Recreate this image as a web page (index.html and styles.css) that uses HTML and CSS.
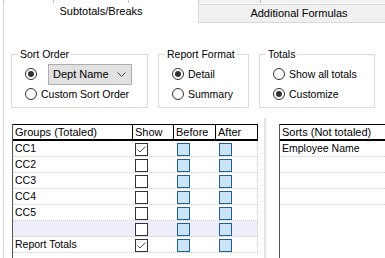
FILE: index.html
```html
<!DOCTYPE html>
<html lang="en">
<head>
    <meta charset="UTF-8">
    <title>Subtotals/Breaks</title>
    <link rel="stylesheet" href="styles.css">
</head>
<body>

<!-- back row of tabs (only the bottom edge shows) -->
<div class="tab-back">
    <span class="seg seg1"></span>
    <span class="seg seg2"></span>
    <span class="seg seg3"></span>
    <span class="seg seg4"></span>
    <span class="seg seg5 grey"></span>
    <span class="seg seg6 grey"></span>
</div>

<div class="tabs">
    <div class="tab active">Subtotals/Breaks</div>
    <div class="tab">Additional Formulas</div>
</div>

<div class="panel">
    <div class="options">
        <fieldset class="box sort-order">
            <legend>Sort Order</legend>
            <div class="opt">
                <span class="radio on"></span>
                <div class="select">
                    <span>Dept Name</span>
                    <svg width="9" height="5" viewBox="0 0 9 5"><polyline points="0.5,0.5 4.5,4.5 8.5,0.5" fill="none" stroke="#444" stroke-width="1"/></svg>
                </div>
            </div>
            <div class="opt"><span class="radio"></span>Custom Sort Order</div>
        </fieldset>

        <fieldset class="box report-format">
            <legend>Report Format</legend>
            <div class="opt"><span class="radio on"></span>Detail</div>
            <div class="opt"><span class="radio"></span>Summary</div>
        </fieldset>

        <fieldset class="box totals">
            <legend>Totals</legend>
            <div class="opt"><span class="radio"></span>Show all totals</div>
            <div class="opt"><span class="radio on"></span>Customize</div>
        </fieldset>

        <div class="extra">
            <div class="extra-label">F</div>
            <div class="extra-box"></div>
        </div>
    </div>

    <div class="lists">
        <div class="grid groups">
            <div class="cols head">
                <div class="cell">Groups (Totaled)</div>
                <div class="cell">Show</div>
                <div class="cell">Before</div>
                <div class="cell">After</div>
            </div>
            <div class="cols row">
                <div class="cell">CC1</div>
                <div class="cell chk show"><span class="check on"><svg width="11" height="11" viewBox="0 0 11 11"><polyline points="1.5,5.5 4,8 9.5,2.5" fill="none" stroke="#555" stroke-width="1"/></svg></span></div>
                <div class="cell chk"><span class="blue"></span></div>
                <div class="cell chk"><span class="blue"></span></div>
            </div>
            <div class="cols row">
                <div class="cell">CC2</div>
                <div class="cell chk show"><span class="check"></span></div>
                <div class="cell chk"><span class="blue"></span></div>
                <div class="cell chk"><span class="blue"></span></div>
            </div>
            <div class="cols row">
                <div class="cell">CC3</div>
                <div class="cell chk show"><span class="check"></span></div>
                <div class="cell chk"><span class="blue"></span></div>
                <div class="cell chk"><span class="blue"></span></div>
            </div>
            <div class="cols row">
                <div class="cell">CC4</div>
                <div class="cell chk show"><span class="check"></span></div>
                <div class="cell chk"><span class="blue"></span></div>
                <div class="cell chk"><span class="blue"></span></div>
            </div>
            <div class="cols row">
                <div class="cell">CC5</div>
                <div class="cell chk show"><span class="check"></span></div>
                <div class="cell chk"><span class="blue"></span></div>
                <div class="cell chk"><span class="blue"></span></div>
            </div>
            <div class="cols row current">
                <div class="cell"></div>
                <div class="cell chk show"><span class="check"></span></div>
                <div class="cell chk"><span class="blue"></span></div>
                <div class="cell chk"><span class="blue"></span></div>
            </div>
            <div class="cols row">
                <div class="cell">Report Totals</div>
                <div class="cell chk show"><span class="check on"><svg width="11" height="11" viewBox="0 0 11 11"><polyline points="1.5,5.5 4,8 9.5,2.5" fill="none" stroke="#555" stroke-width="1"/></svg></span></div>
                <div class="cell chk"><span class="blue"></span></div>
                <div class="cell chk"><span class="blue"></span></div>
            </div>
        </div>

        <div class="splitter"></div>

        <div class="grid sorts">
            <div class="head"><div class="cell">Sorts (Not totaled)</div></div>
            <div class="row"><div class="cell">Employee Name</div></div>
            <div class="row"></div>
            <div class="row"></div>
            <div class="row"></div>
        </div>
    </div>
</div>

</body>
</html>
```

FILE: styles.css
```css
html, body {
    margin: 0;
    padding: 0;
    overflow: hidden;
}
body {
    width: 385px;
    height: 258px;
    font-family: "Liberation Sans", Arial, sans-serif;
    font-size: 11px;
    color: #000;
    background-color: #fff;
}

/* tabs */
.tab-back {
    display: flex;
    height: 3px;
}
.seg {
    flex-shrink: 0;
    border-right: 1px solid #c4c4c4;
}
.seg1 { width: 3px; }
.seg2 { width: 49px; }
.seg3 { width: 74px; }
.seg4 { width: 69px; }
.seg5 { width: 61px; }
.seg6 { flex: 1; border-right: none; }
.grey { background-color: #f0f0f0; }

.tabs {
    display: flex;
    height: 20px;
    margin-left: 3px;
}
.tab {
    flex-shrink: 0;
    text-align: center;
}
.tab.active {
    width: 194px;
    border-left: 1px solid #d9d9d9;
    border-right: 1px solid #d9d9d9;
    line-height: 17px;
}
.tab:not(.active) {
    width: 200px;
    margin-top: 1px;
    background-color: #f0f0f0;
    border-top: 1px solid #d9d9d9;
    border-bottom: 1px solid #d9d9d9;
    line-height: 17px;
}

.panel {
    margin-left: 3px;
    border-left: 1px solid #d9d9d9;
    height: 235px;
}

/* option boxes */
.options {
    display: flex;
    gap: 10px;
    padding: 25px 0 0 7px;
    font-size: 10.5px;
}
.box {
    box-sizing: border-box;
    flex-shrink: 0;
    margin: 0;
    padding: 3px 0 3px 0;
    border: 1px solid #dcdcdc;
    min-width: 0;
}
.box legend {
    margin-left: 6px;
    padding: 0 2px;
    line-height: 13px;
}
.sort-order { width: 137px; }
.report-format { width: 91px; }
.totals { width: 116px; }

.opt {
    display: flex;
    align-items: center;
    height: 20px;
    padding-left: 13px;
    white-space: nowrap;
}
.radio {
    box-sizing: border-box;
    width: 12px;
    height: 12px;
    margin-right: 4px;
    border: 1px solid #333;
    border-radius: 50%;
    background-color: #fff;
    display: flex;
    align-items: center;
    justify-content: center;
    flex-shrink: 0;
}
.radio.on::after {
    content: "";
    width: 6px;
    height: 6px;
    border-radius: 50%;
    background-color: #333;
}
.select {
    box-sizing: border-box;
    width: 84px;
    height: 21px;
    margin-left: 7px;
    padding: 0 5px 0 4px;
    display: flex;
    align-items: center;
    justify-content: space-between;
    background-color: #e1e1e1;
    border: 1px solid #adadad;
    font-size: 11px;
}

.extra {
    flex-shrink: 0;
    width: 3px;
    padding-top: 15px;
    overflow: hidden;
}
.extra-label {
    line-height: 13px;
    color: #1a2a6b;
}
.extra-box {
    height: 16px;
    margin-top: 9px;
    margin-left: 1px;
    border: 1px solid #adadad;
}

/* lists */
.lists {
    display: flex;
    padding: 10px 0 0 8px;
}
.grid {
    box-sizing: border-box;
    height: 140px;
    margin-top: 6px;
    border-left: 1px solid #555;
    flex-shrink: 0;
}
.groups { width: 252px; }
.sorts {
    width: 200px;
    margin-left: 13px;
}
.splitter {
    width: 2px;
    height: 140px;
    background-color: #e3e3e3;
    flex-shrink: 0;
}

.cols {
    display: grid;
    grid-template-columns: 120px 41px 42px 42px;
    width: 245px;
}
.head {
    border-top: 1px solid #000;
    border-bottom: 2px solid #000;
    line-height: 14px;
}
.head .cell {
    padding-left: 2px;
    border-right: 1px solid #000;
    white-space: nowrap;
}
.sorts .head .cell { border-right: none; }

.row {
    height: 15px;
    line-height: 15px;
    border-bottom: 1px dotted #cfcfcf;
    font-size: 10.5px;
}
.cols.row .cell:last-child {
    border-right: 1px dotted #cfcfcf;
}
.row .cell {
    padding-left: 2px;
    white-space: nowrap;
}
.row.current {
    background-color: #eeeefb;
}
.row .chk {
    padding-left: 3px;
}
.row .chk.show {
    padding-left: 2px;
}
.check, .blue {
    box-sizing: border-box;
    display: block;
    width: 13px;
    height: 13px;
    margin-top: 2px;
}
.check {
    border: 1px solid #333;
    background-color: #fff;
}
.check svg {
    display: block;
}
.blue {
    border: 1px solid #1f5e9e;
    background-color: #cce4f7;
}
```
